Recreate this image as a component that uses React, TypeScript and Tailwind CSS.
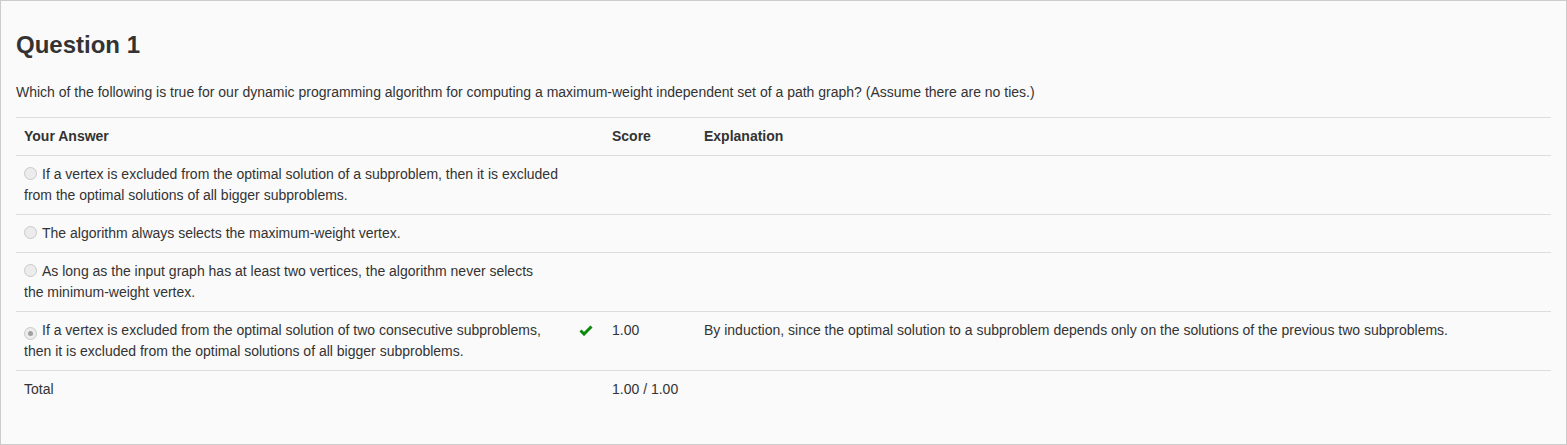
import React from "react";

type Option = {
  text: string;
  checked?: boolean;
  correct?: boolean;
  score?: string;
  explanation?: string;
};

// "\n" marks where the original page wraps a line
const OPTIONS: Option[] = [
  {
    text: "If a vertex is excluded from the optimal solution of a subproblem, then it is excluded from the optimal solutions of all bigger subproblems.",
  },
  { text: "The algorithm always selects the maximum-weight vertex." },
  {
    text: "As long as the input graph has at least two vertices, the algorithm never selects\nthe minimum-weight vertex.",
  },
  {
    text: "If a vertex is excluded from the optimal solution of two consecutive subproblems, then it is excluded from the optimal solutions of all bigger subproblems.",
    checked: true,
    correct: true,
    score: "1.00",
    explanation:
      "By induction, since the optimal solution to a subproblem depends only on the solutions of the previous two subproblems.",
  },
];

function Radio({ checked }: { checked?: boolean }) {
  return (
    <span className="mr-[5px] inline-flex h-[13px] w-[13px] translate-y-[1px] items-center justify-center rounded-full border border-[#c9c9c9] bg-[#ececec] align-baseline">
      {checked && <span className="h-[5px] w-[5px] rounded-full bg-[#a0a0a0]" />}
    </span>
  );
}

function Check() {
  return (
    <svg width="14" height="11" viewBox="0 0 14 11" className="mt-[5px]" aria-hidden="true">
      <polyline
        points="1.5,5.5 5,9 12.5,1.5"
        fill="none"
        stroke="#0a8a0a"
        strokeWidth="3"
        strokeLinejoin="miter"
      />
    </svg>
  );
}

export default function App() {
  return (
    <div
      className="h-[445px] w-[1567px] border border-[#cccccc] bg-[#fafafa] px-[15px] pt-[15px] text-[14px] leading-[21px] text-[#333333]"
      style={{ fontFamily: '"Liberation Sans", Arial, Helvetica, sans-serif' }}
    >
      <h3 className="mt-4 mb-[24px] text-[24px] font-bold leading-[26.4px] text-[#333333]">
        {"Question 1"}
      </h3>
      <p className="mb-[14px]">
        {
          "Which of the following is true for our dynamic programming algorithm for computing a maximum-weight independent set of a path graph? (Assume there are no ties.)"
        }
      </p>
      <table className="w-full border-collapse text-left">
        <thead>
          <tr className="border-t border-b border-[#dddddd]">
            <th colSpan={2} className="p-2 font-bold">
              {"Your Answer"}
            </th>
            <th className="p-2 font-bold">{"Score"}</th>
            <th className="p-2 font-bold">{"Explanation"}</th>
          </tr>
        </thead>
        <tbody>
          {OPTIONS.map((o, i) => (
            <tr key={i} className="border-b border-[#dddddd] align-top">
              <td className="w-[555px] whitespace-pre-line p-2">
                <Radio checked={o.checked} />
                {o.text}
              </td>
              <td className="w-[33px] p-2">{o.correct && <Check />}</td>
              <td className="w-[92px] p-2">{o.score}</td>
              <td className="p-2">{o.explanation}</td>
            </tr>
          ))}
          <tr className="align-top">
            <td className="p-2">{"Total"}</td>
            <td className="p-2" />
            <td className="p-2">{"1.00 / 1.00"}</td>
            <td className="p-2" />
          </tr>
        </tbody>
      </table>
    </div>
  );
}
